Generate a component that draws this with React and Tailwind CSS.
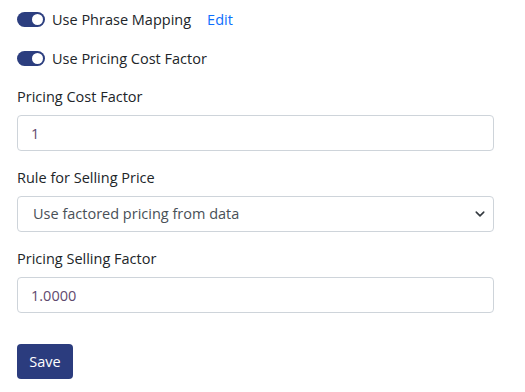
import React, { useState } from "react";

function Toggle({ on, onChange }) {
  return (
    <button
      type="button"
      onClick={() => onChange(!on)}
      className={`flex h-[15px] w-[28px] items-center rounded-full px-[2px] ${on ? "justify-end bg-[#2c3e7f]" : "justify-start bg-gray-300"}`}
    >
      <span className="h-[11px] w-[11px] rounded-full bg-white" />
    </button>
  );
}

export default function App() {
  const [phrase, setPhrase] = useState(true);
  const [pricing, setPricing] = useState(true);
  const [cost, setCost] = useState("1");
  const [rule, setRule] = useState("factored");
  const [selling, setSelling] = useState("1.0000");

  return (
    <div className="w-[525px] bg-white px-[17px] pt-[12px] text-[14.5px] text-[#212529]" style={{ fontFamily: '"Open Sans", "Noto Sans", sans-serif' }}>
      <div className="flex h-[15px] items-center">
        <Toggle on={phrase} onChange={setPhrase} />
        <span className="ml-[7px]">Use Phrase Mapping</span>
        <a href="#" className="ml-[16px] text-[#0d6efd]">Edit</a>
      </div>
      <div className="mt-[24px] flex h-[15px] items-center">
        <Toggle on={pricing} onChange={setPricing} />
        <span className="ml-[7px]">Use Pricing Cost Factor</span>
      </div>

      <div className="mt-[21px]">
        <label className="block leading-[20px]">Pricing Cost Factor</label>
        <input
          value={cost}
          onChange={e => setCost(e.target.value)}
          className="mt-[8px] block h-[36px] w-[477px] rounded-[4px] border border-[#ced4da] px-[13px] text-[#5f4a6e] outline-none"
        />
      </div>

      <div className="mt-[17px]">
        <label className="block leading-[20px]">Rule for Selling Price</label>
        <div className="relative mt-[8px] w-[477px]">
          <select
            value={rule}
            onChange={e => setRule(e.target.value)}
            className="block h-[36px] w-full appearance-none rounded-[4px] border border-[#ced4da] bg-white px-[15px] text-[#495057] outline-none"
          >
            <option value="factored">Use factored pricing from data</option>
            <option value="cost">Use cost pricing</option>
          </select>
          <svg className="pointer-events-none absolute right-[8px] top-[13px]" width="12" height="10" viewBox="0 0 16 16">
            <path d="M2 5l6 6 6-6" fill="none" stroke="#343a40" strokeWidth="2.5" strokeLinecap="round" strokeLinejoin="round" />
          </svg>
        </div>
      </div>

      <div className="mt-[17px]">
        <label className="block leading-[20px]">Pricing Selling Factor</label>
        <input
          value={selling}
          onChange={e => setSelling(e.target.value)}
          className="mt-[8px] block h-[36px] w-[477px] rounded-[4px] border border-[#ced4da] px-[13px] text-[#5f4a6e] outline-none"
        />
      </div>

      <button type="button" className="mt-[31px] mb-[13px] h-[35px] w-[56px] rounded-[4px] bg-[#2b3c7e] text-white">
        Save
      </button>
    </div>
  );
}
